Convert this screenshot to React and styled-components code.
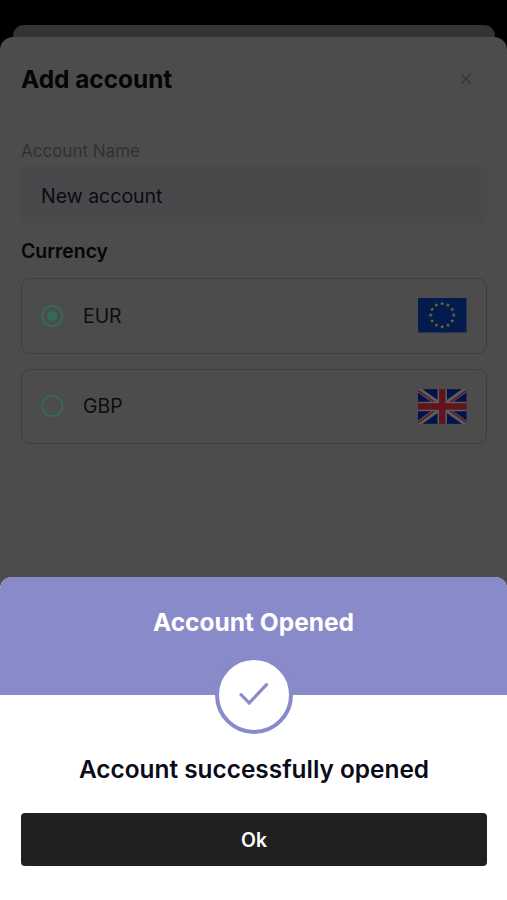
import styled, { createGlobalStyle } from "styled-components";
import { useState } from "react";

const GlobalStyle = createGlobalStyle`
  * {
    box-sizing: border-box;
  }
  body {
    margin: 0;
    background: #000;
    font-family: Inter, "Liberation Sans", sans-serif;
  }
  h1, h2, p {
    margin: 0;
  }
`;

const Screen = styled.div`
  position: relative;
  display: flex;
  flex-direction: column;
  width: 507px;
  height: 900px;
  overflow: hidden;
  padding-top: 25px;
  background: #000;
`;

const PreviousSheet = styled.div`
  flex: none;
  height: 24px;
  margin: 0 12px 0 13px;
  background: #343434;
  border-radius: 11px 11px 0 0;
`;

const Sheet = styled.main`
  position: relative;
  flex: 1;
  margin-top: -12px;
  padding: 26px 20px 0 21px;
  background: #4c4c4c;
  border-radius: 13px 13px 0 0;
`;

const SheetHeader = styled.header`
  display: flex;
  align-items: center;
  justify-content: space-between;
  height: 32px;
  padding-right: 14px;

  h1 {
    font-weight: 700;
    font-size: 24.4px;
    line-height: 32px;
    color: #050507;
  }
  button {
    display: flex;
    padding: 0;
    border: none;
    background: none;
    color: #353535;
  }
`;

const Field = styled.label`
  display: flex;
  flex-direction: column;
  margin-top: 45px;

  span {
    font-size: 17px;
    line-height: 22px;
    color: #313131;
  }
  input {
    height: 57px;
    margin-top: 4px;
    padding: 2px 20px 0;
    border: none;
    outline: none;
    border-radius: 6px;
    background: #49494b;
    font-family: inherit;
    font-size: 19.5px;
    color: #0b0c10;
  }
`;

const SectionTitle = styled.h2`
  margin-top: 15px;
  font-weight: 600;
  font-size: 19.4px;
  line-height: 26px;
  color: #050507;
`;

const Options = styled.div`
  display: flex;
  flex-direction: column;
  gap: 15px;
  margin-top: 14px;
`;

const Option = styled.div`
  display: flex;
  align-items: center;
  height: 75.5px;
  padding: 0 19.5px 0 18px;
  border: 1px solid #3e3e3e;
  border-radius: 9px;

  p {
    flex: 1;
    margin-left: 19px;
    font-size: 19.4px;
    line-height: 26px;
    color: #0b0c10;
  }
`;

const Modal = styled.section`
  position: absolute;
  left: 0;
  right: 0;
  bottom: 0;
  height: 323px;
  background: #fff;
  border-radius: 12px 12px 0 0;
  text-align: center;
`;

const ModalHeader = styled.div`
  position: relative;
  height: 118px;
  padding-top: 29px;
  background: #888aca;
  border-radius: 12px 12px 0 0;

  h2 {
    font-weight: 700;
    font-size: 24.5px;
    line-height: 32px;
    color: #fff;
  }
`;

const StatusBadge = styled.div`
  position: absolute;
  left: 215px;
  bottom: -39px;
  display: flex;
  width: 78px;
  height: 78px;
  border: 4px solid #888aca;
  border-radius: 50%;
  background: #fff;

  svg {
    flex: 1;
  }
`;

const ModalBody = styled.div`
  padding: 58px 20px 0 21px;

  p {
    font-weight: 600;
    font-size: 24.4px;
    line-height: 32px;
    color: #0a0a18;
  }
`;

const OkButton = styled.button`
  width: 100%;
  height: 53px;
  margin-top: 28px;
  padding: 0;
  border: none;
  border-radius: 4px;
  background: #202020;
  font-family: inherit;
  font-weight: 600;
  font-size: 19.4px;
  color: #fff;
`;

const CloseIcon = () => (
  <svg width="14" height="14" viewBox="0 0 14 14" fill="none">
    <path d="M2 2l10 10M12 2L2 12" stroke="currentColor" strokeWidth="1.2" />
  </svg>
);

const CheckIcon = () => (
  <svg viewBox="0 0 70 70" fill="none">
    <path
      d="M22 34.6l8.2 8.4 17.3-18.4"
      stroke="#888aca"
      strokeWidth="3.2"
      strokeLinecap="round"
    />
  </svg>
);

const RadioIcon = ({ checked }) => (
  <svg width="24" height="24" viewBox="0 0 24 24" fill="none">
    <circle cx="12.3" cy="12" r="10.1" stroke="#326a5b" strokeWidth="1.9" />
    {checked && <circle cx="12.3" cy="12" r="5.2" fill="#326a5b" />}
  </svg>
);

const STAR =
  "M0-2.1L.6-.7 2-.65.87.27 1.25 1.7 0 .87-1.25 1.7-.87.27-2-.65-.6-.7z";

const EuFlag = () => (
  <svg width="48.5" height="35" viewBox="0 0 48.5 35">
    <rect width="48.5" height="34.5" rx="1" fill="#041c4d" />
    {[...Array(12)].map((_, i) => {
      const angle = (i * Math.PI) / 6;
      const x = 24.2 + 11.6 * Math.sin(angle);
      const y = 17.2 - 11.6 * Math.cos(angle);
      return (
        <path
          key={i}
          d={STAR}
          fill="#7d7228"
          transform={`translate(${x} ${y})`}
        />
      );
    })}
  </svg>
);

const GbFlag = () => (
  <svg width="48.5" height="35" viewBox="0 0 49 35">
    <rect width="49" height="35" fill="#04124a" />
    <path d="M0 0l49 35M49 0L0 35" stroke="#5c5c5c" strokeWidth="5.4" />
    <path
      d="M0 1.2l20 14.3M29 19.5l20 14.3M49 1.2L29 15.5M20 19.5L0 33.8"
      stroke="#62141e"
      strokeWidth="1.6"
    />
    <path d="M24.5 0v35M0 17.5h49" stroke="#5c5c5c" strokeWidth="9.6" />
    <path d="M24.5 0v35M0 17.5h49" stroke="#62141e" strokeWidth="6.4" />
  </svg>
);

const currencies = [
  { code: "EUR", Flag: EuFlag },
  { code: "GBP", Flag: GbFlag },
];

const App = () => {
  const [name, setName] = useState("New account");
  const [currency, setCurrency] = useState("EUR");

  return (
    <Screen>
      <GlobalStyle />
      <PreviousSheet />
      <Sheet>
        <SheetHeader>
          <h1>Add account</h1>
          <button aria-label="Close">
            <CloseIcon />
          </button>
        </SheetHeader>
        <Field>
          <span>Account Name</span>
          <input value={name} onChange={(e) => setName(e.target.value)} />
        </Field>
        <SectionTitle>Currency</SectionTitle>
        <Options>
          {currencies.map(({ code, Flag }) => (
            <Option key={code} onClick={() => setCurrency(code)}>
              <RadioIcon checked={currency === code} />
              <p>{code}</p>
              <Flag />
            </Option>
          ))}
        </Options>
      </Sheet>
      <Modal>
        <ModalHeader>
          <h2>Account Opened</h2>
          <StatusBadge>
            <CheckIcon />
          </StatusBadge>
        </ModalHeader>
        <ModalBody>
          <p>Account successfully opened</p>
          <OkButton>Ok</OkButton>
        </ModalBody>
      </Modal>
    </Screen>
  );
};

export default App;
